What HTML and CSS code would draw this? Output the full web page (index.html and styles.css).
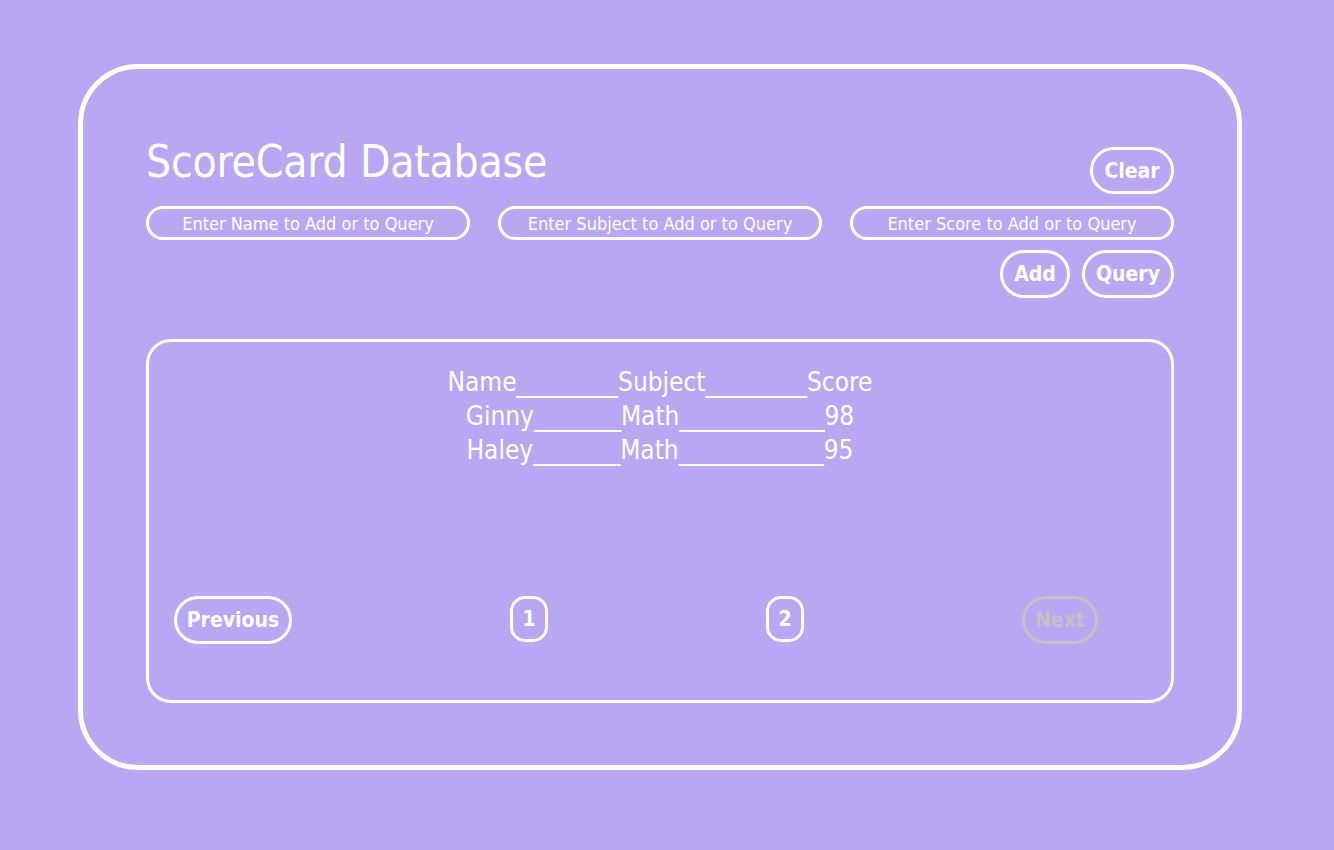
FILE: index.html
```html
<!DOCTYPE html>
<html lang="en">
<head>
<meta charset="utf-8">
<title>ScoreCard Database</title>
<link rel="stylesheet" href="styles.css">
</head>
<body>
<main class="card">
  <header class="head">
    <h1 class="title">ScoreCard Database</h1>
    <button class="btn btn-clear">Clear</button>
  </header>
  <div class="inputs">
    <input class="field" type="text" placeholder="Enter Name to Add or to Query">
    <input class="field" type="text" placeholder="Enter Subject to Add or to Query">
    <input class="field" type="text" placeholder="Enter Score to Add or to Query">
  </div>
  <div class="actions">
    <button class="btn btn-add">Add</button>
    <button class="btn btn-query">Query</button>
  </div>
  <section class="panel">
    <div class="rows">
      <div class="row">Name<span class="rule">_______</span>Subject<span class="rule">_______</span>Score</div>
      <div class="row">Ginny<span class="rule">______</span>Math<span class="rule">__________</span>98</div>
      <div class="row">Haley<span class="rule">______</span>Math<span class="rule">__________</span>95</div>
    </div>
    <nav class="pager">
      <button class="btn btn-prev">Previous</button>
      <button class="btn btn-page">1</button>
      <button class="btn btn-page">2</button>
      <button class="btn btn-next" disabled>Next</button>
    </nav>
  </section>
</main>
</body>
</html>
```
FILE: styles.css
```css
html, body {
  margin: 0;
  padding: 0;
}
body {
  background: #b8a7f2;
  width: 1334px;
  height: 850px;
  font-family: "DejaVu Sans Condensed", "DejaVu Sans", sans-serif;
  color: #fff;
  overflow: hidden;
}
.card {
  box-sizing: border-box;
  margin: 64px 0 0 78px;
  width: 1164px;
  height: 706px;
  border: 5px solid #fff;
  border-radius: 60px;
  padding: 65px 63px 0 63px;
  display: flex;
  flex-direction: column;
}
.head {
  display: flex;
  justify-content: space-between;
  align-items: flex-start;
  height: 72px;
  flex: none;
}
.title {
  margin: 0;
  font-size: 44px;
  font-weight: normal;
  line-height: 56px;
  letter-spacing: -0.2px;
}
.btn {
  box-sizing: border-box;
  background: transparent;
  border: 3px solid #fff;
  color: #fff;
  font-family: "DejaVu Sans Condensed", "DejaVu Sans", sans-serif;
  font-weight: bold;
  font-size: 21px;
  height: 48px;
  border-radius: 24px;
  padding: 0;
  cursor: pointer;
}
.btn-clear {
  width: 84px;
  height: 47px;
  margin-top: 13px;
}
.inputs {
  display: flex;
  gap: 28px;
}
.field {
  box-sizing: border-box;
  width: 324px;
  height: 34px;
  border: 3px solid #fff;
  border-radius: 17px;
  background: transparent;
  color: #fff;
  text-align: center;
  font-family: "DejaVu Sans Condensed", "DejaVu Sans", sans-serif;
  font-size: 18px;
  padding: 0 8px;
  outline: none;
}
.field::placeholder {
  color: #fff;
  opacity: 1;
}
.actions {
  display: flex;
  justify-content: flex-end;
  gap: 12px;
  margin-top: 10px;
}
.btn-add { width: 70px; }
.btn-query { width: 92px; }
.panel {
  box-sizing: border-box;
  margin-top: 41px;
  width: 1028px;
  height: 364px;
  border: 3px solid #fff;
  border-radius: 25px;
  display: flex;
  flex-direction: column;
}
.rows {
  margin-top: 23px;
  height: 231px;
  text-align: center;
  font-size: 26px;
  line-height: 34px;
}
.rule {
  font-family: "DejaVu Sans", sans-serif;
  font-size: 29px;
  line-height: 0;
}
.pager {
  display: flex;
  align-items: flex-start;
  gap: 218px;
  padding-left: 25px;
}
.btn-prev { width: 118px; }
.btn-page {
  width: 38px;
  height: 46px;
  border-radius: 15px;
}
.btn-next {
  width: 76px;
  border-color: #c2c2c2;
  color: #c2c2c2;
  cursor: default;
}
```
